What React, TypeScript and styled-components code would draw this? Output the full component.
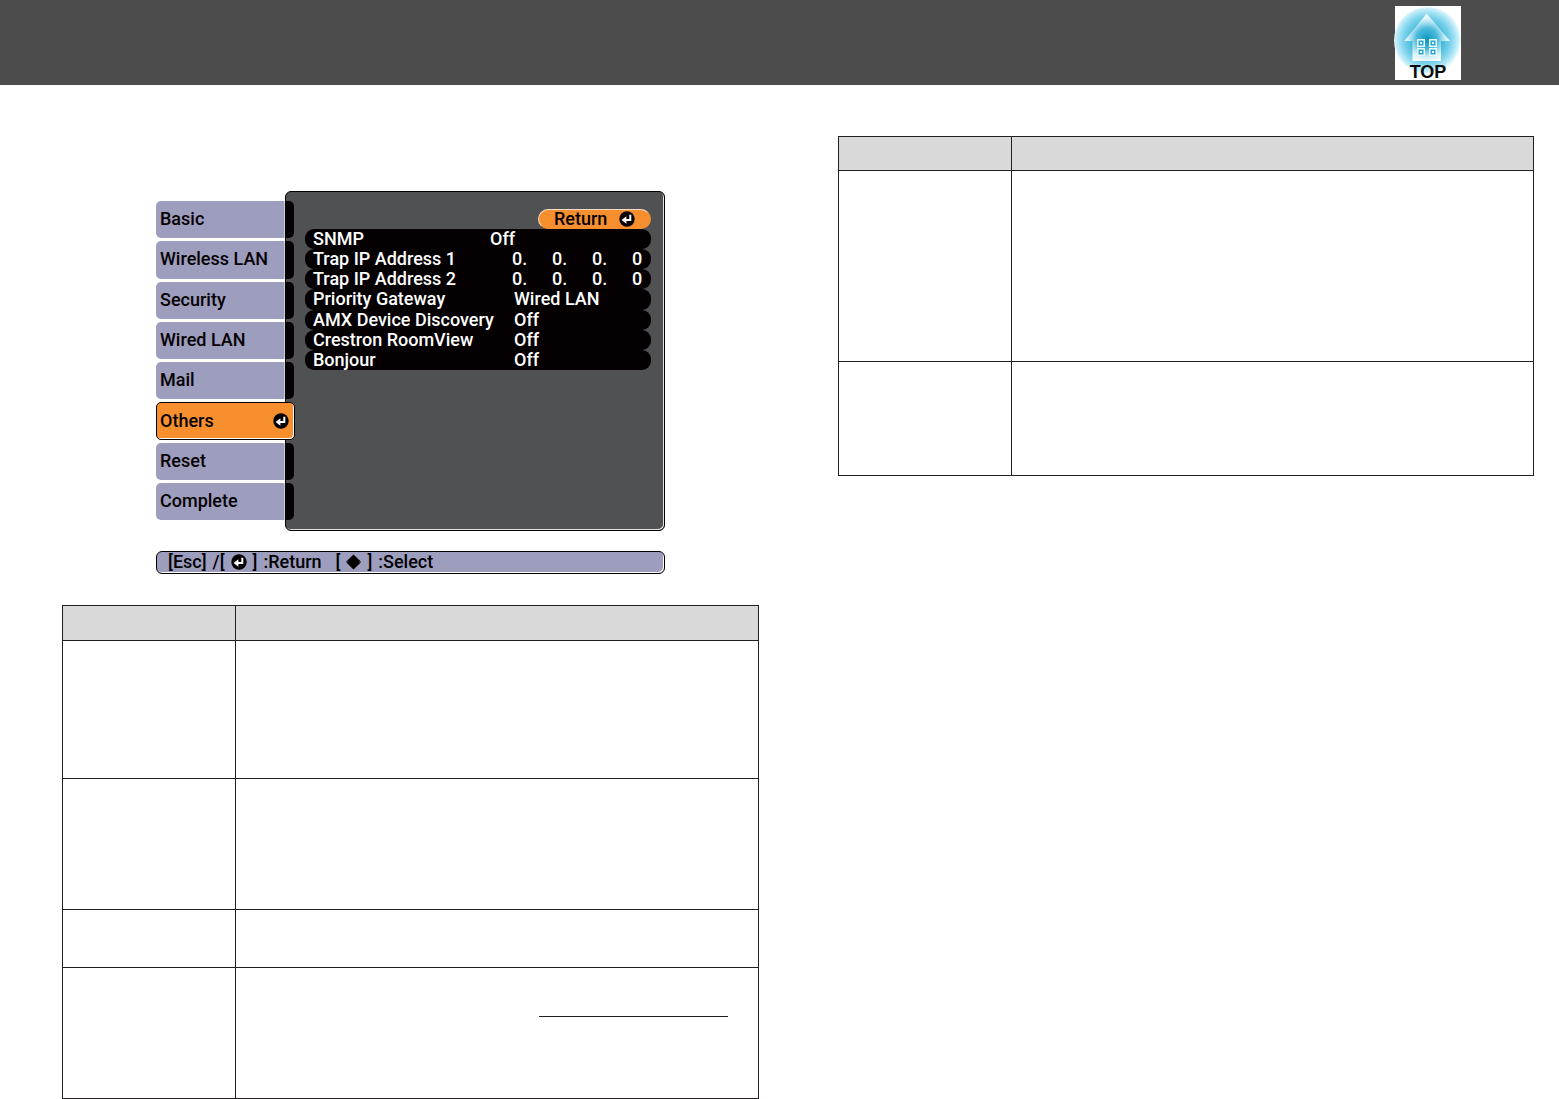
import React from "react";
import styled, { createGlobalStyle, css } from "styled-components";

const GlobalStyle = createGlobalStyle`
  *, *::before, *::after { box-sizing: border-box; }
  body {
    margin: 0;
    background: #ffffff;
    color: #000000;
    font-family: Roboto, "Liberation Sans", sans-serif;
  }
`;

const colors = {
  header: "#4c4c4c",
  panel: "#505153",
  lilac: "#9d9dbe",
  orange: "#f78f2f",
  ink: "#050102",
  line: "#231f20",
  tableHead: "#d9d9d9",
};

const osdText = css`
  font-family: Roboto, "Liberation Sans", sans-serif;
  font-size: 18px;
  font-weight: 500;
  line-height: 20px;
  white-space: nowrap;
`;

const Header = styled.header`
  display: flex;
  justify-content: flex-end;
  height: 85px;
  padding: 6px 98px 0 0;
  background: ${colors.header};
`;

const TopLink = styled.a`
  display: grid;
  width: 66px;
  height: 74px;
  background: #ffffff;
  color: #0b0b0b;
  text-decoration: none;
  > * { grid-area: 1 / 1; }
`;

const TopLabel = styled.span`
  place-self: end center;
  font: bold 18px/16px "Liberation Sans", sans-serif;
`;

const Page = styled.main`
  display: grid;
  grid-template-columns: 697fr 696fr;
  column-gap: 79px;
  align-items: start;
  padding: 0 25px 0 62px;
`;

const LeftColumn = styled.section`
  display: grid;
  row-gap: 31px;
  padding-top: 106px;
`;

const RightColumn = styled.section`
  padding-top: 51px;
`;

const Screen = styled.div`
  display: grid;
  justify-self: center;
  row-gap: 20px;
  width: 100%;
  max-width: 509px;
`;

const ScreenBody = styled.div`
  display: flex;
  align-items: stretch;
  height: 340px;
`;

const Tabs = styled.nav`
  position: relative;
  z-index: 1;
  display: grid;
  flex: 0 0 139px;
  grid-auto-rows: 1fr;
  row-gap: 3px;
  padding: 10px 0 11px;
`;

const Tab = styled.button<{ $active?: boolean }>`
  ${osdText}
  display: flex;
  align-items: center;
  justify-content: space-between;
  margin: 0 1px 0 0;
  padding: 0 5px 1px 4px;
  border: 0;
  border-radius: 5px;
  background: linear-gradient(
    to right,
    ${colors.lilac} 128px,
    #c9c9dc 128px,
    #c9c9dc 129px,
    ${colors.ink} 129px
  );
  color: ${colors.ink};
  text-align: left;
  ${(p) =>
    p.$active &&
    css`
      margin-right: 0;
      border: 1px solid ${colors.ink};
      padding: 0 5px 0 3px;
      background: ${colors.orange};
      box-shadow: inset -1px -1px 0 #ffffff;
    `}
`;

const Panel = styled.div`
  flex: 1;
  min-width: 0;
  margin-left: -10px;
  padding: 17px 13px 0 19px;
  border: 1px solid ${colors.ink};
  border-radius: 6px;
  background: ${colors.panel};
  box-shadow: inset -1px -1px 0 #e6e2e4;
`;

const ReturnButton = styled.button`
  ${osdText}
  display: flex;
  align-items: center;
  justify-content: space-between;
  width: 113px;
  height: 20px;
  margin-left: auto;
  padding: 0 15px;
  border: 1px solid ${colors.orange};
  border-top-color: #f4dcc8;
  border-left-color: #f4dcc8;
  border-radius: 10px;
  background: ${colors.orange};
  color: ${colors.ink};
`;

const Settings = styled.dl`
  display: grid;
  grid-auto-rows: 1fr;
  height: 141px;
  margin: 0;
`;

const Setting = styled.div`
  display: grid;
  grid-template-columns: 177px 1fr;
  align-items: center;
  padding: 0 8px;
  border-radius: 9px;
  background: ${colors.ink};
  color: #ffffff;
`;

const SettingName = styled.dt`
  ${osdText}
`;

const SettingValue = styled.dd<{ $indent?: boolean }>`
  ${osdText}
  margin: 0;
  padding-left: ${(p) => (p.$indent ? "24px" : "0")};
`;

const Address = styled.dd`
  ${osdText}
  display: grid;
  grid-template-columns: repeat(3, 40px) auto;
  justify-content: start;
  margin: 0;
  padding-left: 22px;
`;

const HelpBar = styled.div`
  ${osdText}
  display: flex;
  align-items: center;
  column-gap: 14px;
  height: 23px;
  padding: 0 11px 1px;
  border: 1px solid ${colors.ink};
  border-radius: 6px;
  background: ${colors.lilac};
  box-shadow: inset -1px -1px 0 #ffffff;
`;

const Hint = styled.span`
  display: flex;
  align-items: center;
  column-gap: 6px;
`;

const Sheet = styled.table`
  width: 100%;
  border-collapse: collapse;
  table-layout: fixed;
`;

const NameColumn = styled.col`
  width: 173px;
`;

const HeadCell = styled.th<{ $height: number }>`
  height: ${(p) => p.$height}px;
  padding: 0;
  border: 1px solid ${colors.line};
  background: ${colors.tableHead};
`;

const Cell = styled.td<{ $height: number }>`
  height: ${(p) => p.$height}px;
  padding: 0 30px 0 0;
  border: 1px solid ${colors.line};
  vertical-align: top;
`;

const Underline = styled.div`
  width: 189px;
  height: 49px;
  margin-left: auto;
  border-bottom: 1px solid ${colors.line};
`;

const HomeIcon = () => (
  <svg width="66" height="74" viewBox="0 0 66 74" aria-hidden="true" overflow="visible">
    <defs>
      <radialGradient id="glow" gradientUnits="userSpaceOnUse" cx="32" cy="34" r="34">
        <stop offset="0" stopColor="#0b93bd" />
        <stop offset="0.35" stopColor="#2fb0d5" />
        <stop offset="0.7" stopColor="#7dd3ec" />
        <stop offset="0.9" stopColor="#c0ecf9" />
        <stop offset="1" stopColor="#f4fcff" />
      </radialGradient>
      <radialGradient id="house" gradientUnits="userSpaceOnUse" cx="32" cy="32" r="26">
        <stop offset="0" stopColor="#ffffff" stopOpacity="0" />
        <stop offset="0.4" stopColor="#ffffff" stopOpacity="0.15" />
        <stop offset="0.75" stopColor="#ffffff" stopOpacity="0.75" />
        <stop offset="1" stopColor="#ffffff" stopOpacity="1" />
      </radialGradient>
    </defs>
    <circle cx="32.5" cy="34.5" r="33.5" fill="url(#glow)" />
    <path d="M31.7 7.5 55 35H46V55H17.5V35H9.3Z" fill="url(#house)" />
    {[[22, 33], [34, 33], [22, 42], [34, 42]].map(([x, y]) => (
      <g key={`${x}-${y}`}>
        <rect x={x} y={y} width="8" height="8" fill="#e9f9fe" />
        <rect x={x + 1.5} y={y + 1.5} width="5" height="5" fill="#2aa8cf" />
        <rect x={x + 3} y={y + 3} width="2" height="2" fill="#e9f9fe" />
      </g>
    ))}
  </svg>
);

const EnterIcon = () => (
  <svg width="16" height="16" viewBox="0 0 16 16" aria-hidden="true">
    <circle cx="8" cy="8" r="7.7" fill={colors.ink} />
    <path d="M11.3 3.7V9H6" fill="none" stroke="#ffffff" strokeWidth="2" />
    <path d="M2.6 9 7.4 5.2V12.8Z" fill="#ffffff" />
  </svg>
);

const UpDownIcon = () => (
  <svg width="15" height="16" viewBox="0 0 15 16" aria-hidden="true">
    <path d="M7.5 0.5 15 7.7H0ZM0 8.3H15L7.5 15.5ZM2 7H13V9H2Z" fill={colors.ink} />
  </svg>
);

const tabs = ["Basic", "Wireless LAN", "Security", "Wired LAN", "Mail", "Others", "Reset", "Complete"];

const settings: { name: string; value?: string; address?: string[]; indent?: boolean }[] = [
  { name: "SNMP", value: "Off" },
  { name: "Trap IP Address 1", address: ["0.", "0.", "0.", "0"] },
  { name: "Trap IP Address 2", address: ["0.", "0.", "0.", "0"] },
  { name: "Priority Gateway", value: "Wired LAN", indent: true },
  { name: "AMX Device Discovery", value: "Off", indent: true },
  { name: "Crestron RoomView", value: "Off", indent: true },
  { name: "Bonjour", value: "Off", indent: true },
];

function DescriptionTable({
  headHeight,
  rows,
}: {
  headHeight: number;
  rows: { height: number; content?: React.ReactNode }[];
}) {
  return (
    <Sheet>
      <colgroup>
        <NameColumn />
        <col />
      </colgroup>
      <thead>
        <tr>
          <HeadCell scope="col" $height={headHeight} />
          <HeadCell scope="col" $height={headHeight} />
        </tr>
      </thead>
      <tbody>
        {rows.map((row, i) => (
          <tr key={i}>
            <Cell $height={row.height} />
            <Cell $height={row.height}>{row.content}</Cell>
          </tr>
        ))}
      </tbody>
    </Sheet>
  );
}

export default function App() {
  return (
    <>
      <GlobalStyle />
      <Header>
        <TopLink href="#top">
          <HomeIcon />
          <TopLabel>TOP</TopLabel>
        </TopLink>
      </Header>
      <Page>
        <LeftColumn>
          <Screen>
            <ScreenBody>
              <Tabs>
                {tabs.map((tab) => (
                  <Tab key={tab} type="button" $active={tab === "Others"}>
                    {tab}
                    {tab === "Others" && <EnterIcon />}
                  </Tab>
                ))}
              </Tabs>
              <Panel>
                <ReturnButton type="button">
                  Return
                  <EnterIcon />
                </ReturnButton>
                <Settings>
                  {settings.map((s) => (
                    <Setting key={s.name}>
                      <SettingName>{s.name}</SettingName>
                      {s.address ? (
                        <Address>
                          {s.address.map((part, i) => (
                            <span key={i}>{part}</span>
                          ))}
                        </Address>
                      ) : (
                        <SettingValue $indent={s.indent}>{s.value}</SettingValue>
                      )}
                    </Setting>
                  ))}
                </Settings>
              </Panel>
            </ScreenBody>
            <HelpBar>
              <Hint>
                <span>[Esc]</span>
                <span>/[</span>
                <EnterIcon />
                <span>]</span>
                <span>:Return</span>
              </Hint>
              <Hint>
                <span>[</span>
                <UpDownIcon />
                <span>]</span>
                <span>:Select</span>
              </Hint>
            </HelpBar>
          </Screen>
          <DescriptionTable
            headHeight={35}
            rows={[
              { height: 138 },
              { height: 131 },
              { height: 58 },
              { height: 131, content: <Underline /> },
            ]}
          />
        </LeftColumn>
        <RightColumn>
          <DescriptionTable headHeight={34} rows={[{ height: 191 }, { height: 114 }]} />
        </RightColumn>
      </Page>
    </>
  );
}
